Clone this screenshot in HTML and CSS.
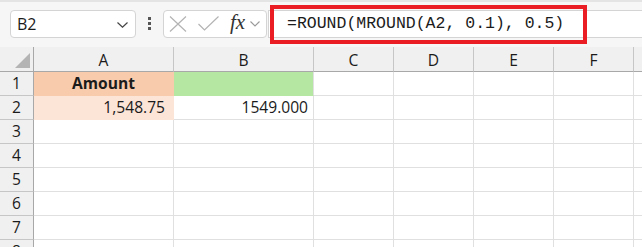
FILE: index.html
```html
<!DOCTYPE html>
<html>
<head>
    <meta charset="UTF-8">
    <title>ROUND MROUND</title>
    <link rel="stylesheet" href="styles.css">
</head>
<body>
    <div class="toolbar">
        <div class="namebox">
            <span class="ref">B2</span>
            <svg class="chevron" width="11" height="6" viewBox="0 0 11 6"><path d="M0.5 0.5 L5.5 5.2 L10.5 0.5" fill="none" stroke="#444" stroke-width="1.2"/></svg>
        </div>
        <svg class="grip" width="3" height="13" viewBox="0 0 3 13">
            <rect x="0" y="0" width="3" height="3" fill="#555"/>
            <rect x="0" y="5" width="3" height="3" fill="#555"/>
            <rect x="0" y="10" width="3" height="3" fill="#555"/>
        </svg>
        <div class="fxbox">
            <svg class="icon" width="18" height="16" viewBox="0 0 18 16"><path d="M1 0.5 L17 15.5 M17 0.5 L1 15.5" fill="none" stroke="#b3b3b3" stroke-width="1.2"/></svg>
            <svg class="icon" width="21" height="15" viewBox="0 0 21 15"><path d="M0.5 8 L6.5 14 L20.5 0.5" fill="none" stroke="#b3b3b3" stroke-width="1.2"/></svg>
            <span class="fx">fx</span>
            <svg class="small-chevron" width="10" height="6" viewBox="0 0 10 6"><path d="M0.5 0.5 L5 5 L9.5 0.5" fill="none" stroke="#9a9a9a" stroke-width="1.1"/></svg>
        </div>
        <div class="formula">=ROUND(MROUND(A2, 0.1), 0.5)</div>
        <div class="highlight"></div>
    </div>

    <div class="sheet">
        <div class="corner"><span class="triangle"></span></div>
        <div class="col">A</div>
        <div class="col">B</div>
        <div class="col">C</div>
        <div class="col">D</div>
        <div class="col">E</div>
        <div class="col">F</div>
        <div class="col"></div>

        <div class="row">1</div>
        <div class="cell amount-head">Amount</div>
        <div class="cell result-head"></div>
        <div class="cell"></div><div class="cell"></div><div class="cell"></div><div class="cell"></div><div class="cell"></div>

        <div class="row">2</div>
        <div class="cell num amount">1,548.75</div>
        <div class="cell num">1549.000</div>
        <div class="cell"></div><div class="cell"></div><div class="cell"></div><div class="cell"></div><div class="cell"></div>

        <div class="row">3</div>
        <div class="cell"></div><div class="cell"></div><div class="cell"></div><div class="cell"></div><div class="cell"></div><div class="cell"></div><div class="cell"></div>

        <div class="row">4</div>
        <div class="cell"></div><div class="cell"></div><div class="cell"></div><div class="cell"></div><div class="cell"></div><div class="cell"></div><div class="cell"></div>

        <div class="row">5</div>
        <div class="cell"></div><div class="cell"></div><div class="cell"></div><div class="cell"></div><div class="cell"></div><div class="cell"></div><div class="cell"></div>

        <div class="row">6</div>
        <div class="cell"></div><div class="cell"></div><div class="cell"></div><div class="cell"></div><div class="cell"></div><div class="cell"></div><div class="cell"></div>

        <div class="row">7</div>
        <div class="cell"></div><div class="cell"></div><div class="cell"></div><div class="cell"></div><div class="cell"></div><div class="cell"></div><div class="cell"></div>

        <div class="row">8</div>
        <div class="cell"></div><div class="cell"></div><div class="cell"></div><div class="cell"></div><div class="cell"></div><div class="cell"></div><div class="cell"></div>
    </div>
</body>
</html>
```
FILE: styles.css
```css
body {
    margin: 0;
    width: 642px;
    height: 247px;
    overflow: hidden;
    background-color: #ffffff;
    font-family: "Open Sans", "Noto Sans", sans-serif;
    color: #1b1b1b;
}

.toolbar {
    position: relative;
    display: flex;
    align-items: center;
    height: 47px;
    box-sizing: border-box;
    padding-left: 10px;
    padding-bottom: 2px;
    background-color: #f6f6f6;
    border-top: 2px solid #e4e4e4;
}

.namebox {
    display: flex;
    align-items: center;
    justify-content: space-between;
    width: 126px;
    height: 28px;
    box-sizing: border-box;
    padding: 0 7px 0 6px;
    background-color: #ffffff;
    border: 1px solid #d4d4d4;
    border-radius: 4px;
}

.ref {
    font-size: 16px;
}

.chevron {
    margin-top: 2px;
}

.grip {
    margin: 0 12px 0 12px;
}

.fxbox {
    display: flex;
    align-items: center;
    width: 104px;
    height: 28px;
    box-sizing: border-box;
    padding-left: 5px;
    background-color: #ffffff;
    border: 1px solid #d4d4d4;
    border-radius: 4px;
}

.fxbox .icon {
    margin-right: 11px;
}

.fx {
    font-family: "Liberation Serif", "DejaVu Serif", serif;
    font-style: italic;
    font-size: 21px;
    color: #333333;
    margin-top: -3px;
    margin-right: 5px;
}

.small-chevron {
    margin-top: 1px;
}

.formula {
    flex: 1;
    height: 28px;
    box-sizing: border-box;
    margin-left: 1px;
    padding-left: 18px;
    line-height: 26px;
    background-color: #ffffff;
    border: 1px solid #d4d4d4;
    border-right: none;
    font-family: "Liberation Mono", "DejaVu Sans Mono", monospace;
    font-size: 16.5px;
    color: #1b1b1b;
    white-space: nowrap;
}

.highlight {
    position: absolute;
    left: 270px;
    top: 3px;
    width: 317px;
    height: 39px;
    box-sizing: border-box;
    border: 4px solid #ea1c24;
}

.sheet {
    display: grid;
    grid-template-columns: 34px 140px 140px 80px 80px 80px 80px 1fr;
    grid-template-rows: 25px;
    grid-auto-rows: 24px;
    font-size: 15.6px;
}

.sheet > div {
    box-sizing: border-box;
    border-right: 1px solid #e0e0e0;
    border-bottom: 1px solid #e0e0e0;
    line-height: 23px;
    white-space: nowrap;
}

.sheet .corner {
    position: relative;
    background-color: #f0f0f0;
    border-right: 1px solid #a8a8a8;
    border-bottom: 1px solid #a8a8a8;
}

.triangle {
    position: absolute;
    right: 3px;
    bottom: 3px;
    width: 15px;
    height: 15px;
    background-color: #b4b4b4;
    clip-path: polygon(100% 0, 100% 100%, 0 100%);
}

.sheet .col {
    text-align: center;
    line-height: 26px;
    background-color: #f0f0f0;
    border-right: 1px solid #c6c6c6;
    border-bottom: 1px solid #a8a8a8;
}

.sheet .row {
    text-align: center;
    background-color: #f0f0f0;
    border-right: 1px solid #a8a8a8;
    border-bottom: 1px solid #c6c6c6;
}

.cell {
    padding: 0 5px;
}

.num {
    text-align: right;
}

.sheet .amount-head {
    text-align: center;
    font-weight: bold;
    background-color: #f8cbad;
    border-color: #f8cbad;
}

.sheet .amount {
    background-color: #fce4d6;
    border-color: #fce4d6;
    padding-right: 8px;
}

.sheet .result-head {
    background-color: #b5e6a2;
    border-bottom-color: #b5e6a2;
}
```
